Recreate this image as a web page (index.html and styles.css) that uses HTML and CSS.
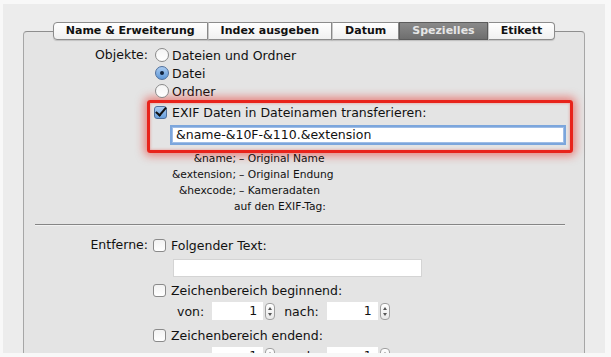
FILE: index.html
```html
<!DOCTYPE html>
<html lang="de">
<head>
    <meta charset="UTF-8">
    <title>Spezielles</title>
    <link rel="stylesheet" href="styles.css">
</head>
<body>

    <div class="window">
        <div class="tabs">
            <div class="tab">Name &amp; Erweiterung</div>
            <div class="tab">Index ausgeben</div>
            <div class="tab">Datum</div>
            <div class="tab active">Spezielles</div>
            <div class="tab">Etikett</div>
        </div>

        <div class="box">
            <!-- Objekte -->
            <div class="row">
                <div class="label">Objekte:</div>
                <div class="controls">
                    <div class="option"><span class="radio"></span>Dateien und Ordner</div>
                    <div class="option"><span class="radio on"></span>Datei</div>
                    <div class="option"><span class="radio"></span>Ordner</div>

                    <div class="exif">
                        <div class="option"><span class="check on"></span>EXIF Daten in Dateinamen transferieren:</div>
                        <div class="field focus">&amp;name-&amp;10F-&amp;110.&amp;extension</div>
                    </div>
                </div>
            </div>

            <div class="legend">
                <span class="key">&amp;name;</span><span>– Original Name</span>
                <span class="key">&amp;extension;</span><span>– Original Endung</span>
                <span class="key">&amp;hexcode;</span><span>– Kameradaten</span>
                <span></span><span class="more">auf den EXIF-Tag:</span>
            </div>

            <div class="separator"></div>

            <!-- Entferne -->
            <div class="row">
                <div class="label">Entferne:</div>
                <div class="controls">
                    <div class="option"><span class="check"></span>Folgender Text:</div>
                    <div class="field plain"></div>

                    <div class="option"><span class="check"></span>Zeichenbereich beginnend:</div>
                    <div class="range">
                        von: <span class="num">1</span><span class="stepper"></span>
                        nach: <span class="num">1</span><span class="stepper"></span>
                    </div>

                    <div class="option"><span class="check"></span>Zeichenbereich endend:</div>
                    <div class="range">
                        von: <span class="num">1</span><span class="stepper"></span>
                        nach: <span class="num">1</span><span class="stepper"></span>
                    </div>
                </div>
            </div>
        </div>
    </div>

</body>
</html>
```

FILE: styles.css
```css
body {
    margin: 0;
    background: #f8f8f8;
    font-family: "DejaVu Sans", Verdana, sans-serif;
    font-size: 12.5px;
    color: #111;
}
.window {
    margin: 4px 0 0 3px;
    width: 602px;
    height: 349px;
    background: #ececec;
    overflow: hidden;
}

/* Reiter oben */
.tabs {
    display: flex;
    justify-content: center;
    margin-top: 18px;
    position: relative;
    z-index: 1;
}
.tab {
    height: 16px;
    line-height: 16px;
    padding: 0 12px;
    font-size: 11px;
    font-weight: bold;
    background: linear-gradient(#ffffff, #f0f0f0);
    border: 1px solid #8c8c8c;
    border-left: 1px solid #c8c8c8;
    box-shadow: 0 1px 1px rgba(0, 0, 0, 0.15);
}
.tab:first-child {
    border-left: 1px solid #8c8c8c;
    border-radius: 4px 0 0 4px;
}
.tab:last-child {
    border-radius: 0 4px 4px 0;
}
.tab.active {
    color: #e6e6e6;
    background: linear-gradient(#8a8a8a, #6e6e6e);
    border-color: #5c5c5c;
}

.box {
    margin: -9px 20px 0;
    height: 400px;
    background: #e4e4e4;
    border: 1px solid #a6a6a6;
    border-top-color: #8e8e8e;
    border-radius: 4px 4px 0 0;
    padding-top: 14px;
}
.row {
    display: flex;
}
.label {
    width: 124px;
    text-align: right;
    line-height: 18px;
}
.controls {
    margin-left: 7px;
    display: flex;
    flex-direction: column;
}
.option {
    display: flex;
    align-items: center;
    height: 18px;
}

/* Radio und Checkbox */
.radio {
    width: 14px;
    height: 14px;
    border-radius: 50%;
    border: 1px solid #8a8a8a;
    background: linear-gradient(#f4f4f4, #ffffff);
    margin-right: 3px;
    box-sizing: border-box;
    position: relative;
}
.radio.on {
    border-color: #4e6f9c;
    background: linear-gradient(#aacbf0, #5f98d8);
}
.radio.on::after {
    content: "";
    position: absolute;
    left: 4px;
    top: 4px;
    width: 4px;
    height: 4px;
    border-radius: 50%;
    background: #10213a;
}
.check {
    width: 13px;
    height: 13px;
    box-sizing: border-box;
    border: 1px solid #8a8a8a;
    border-radius: 3px;
    background: linear-gradient(#f2f2f2, #ffffff);
    margin-right: 5px;
    margin-left: -2px;
    position: relative;
}
.check.on {
    border-color: #4e6f9c;
    background: linear-gradient(#aacbf0, #6aa0dc);
}
.check.on::after {
    content: "";
    position: absolute;
    left: 3px;
    top: -2px;
    width: 4px;
    height: 9px;
    border: solid #111;
    border-width: 0 2px 2px 0;
    transform: rotate(40deg);
}

/* Rot markierter Bereich */
.exif {
    margin: 0 0 0 -8px;
    width: 411px;
    padding: 0 4px 5px 5px;
    border: 3px solid #e8231b;
    border-radius: 3px;
    box-shadow: 0 0 8px 3px rgba(235, 40, 30, 0.5), inset 0 0 3px rgba(235, 40, 30, 0.45);
}
.exif .option {
    height: 19px;
    margin-left: 1px;
}

.field {
    background: #fff;
    box-sizing: border-box;
}
.field.focus {
    margin: 3px 0 0 15px;
    height: 20px;
    line-height: 16px;
    padding: 0 4px;
    font-size: 12.5px;
    border: 2px solid #7ca6dc;
    box-shadow: inset 0 0 0 1px #9fbde6;
}
.field.plain {
    margin: 5px 0 4px 18px;
    width: 249px;
    height: 18px;
    border: 1px solid #d4d4d4;
}

/* Legende */
.legend {
    display: grid;
    grid-template-columns: 212px auto;
    column-gap: 3px;
    font-size: 10.7px;
    line-height: 16px;
    margin-top: -2px;
}
.key {
    text-align: right;
}
.more {
    margin-left: -5px;
}

.separator {
    margin: 9px 19px 10px 11px;
    border-top: 1px solid #858585;
    border-bottom: 1px solid #f2f2f2;
}

.range {
    display: flex;
    align-items: center;
    height: 18px;
    margin: 3px 0 6px 22px;
}
.num {
    width: 51px;
    height: 18px;
    line-height: 18px;
    box-sizing: border-box;
    background: #fff;
    text-align: right;
    padding-right: 6px;
    margin: 0 2px 0 8px;
}
.stepper {
    width: 10px;
    height: 17px;
    box-sizing: border-box;
    border: 1px solid #a0a0a0;
    border-radius: 4px;
    background: linear-gradient(#ffffff, #e8e8e8);
    margin-right: 9px;
    position: relative;
}
.stepper::before, .stepper::after {
    content: "";
    position: absolute;
    left: 2px;
    border-left: 2px solid transparent;
    border-right: 2px solid transparent;
}
.stepper::before {
    top: 3px;
    border-bottom: 3px solid #555;
}
.stepper::after {
    bottom: 3px;
    border-top: 3px solid #555;
}
```
